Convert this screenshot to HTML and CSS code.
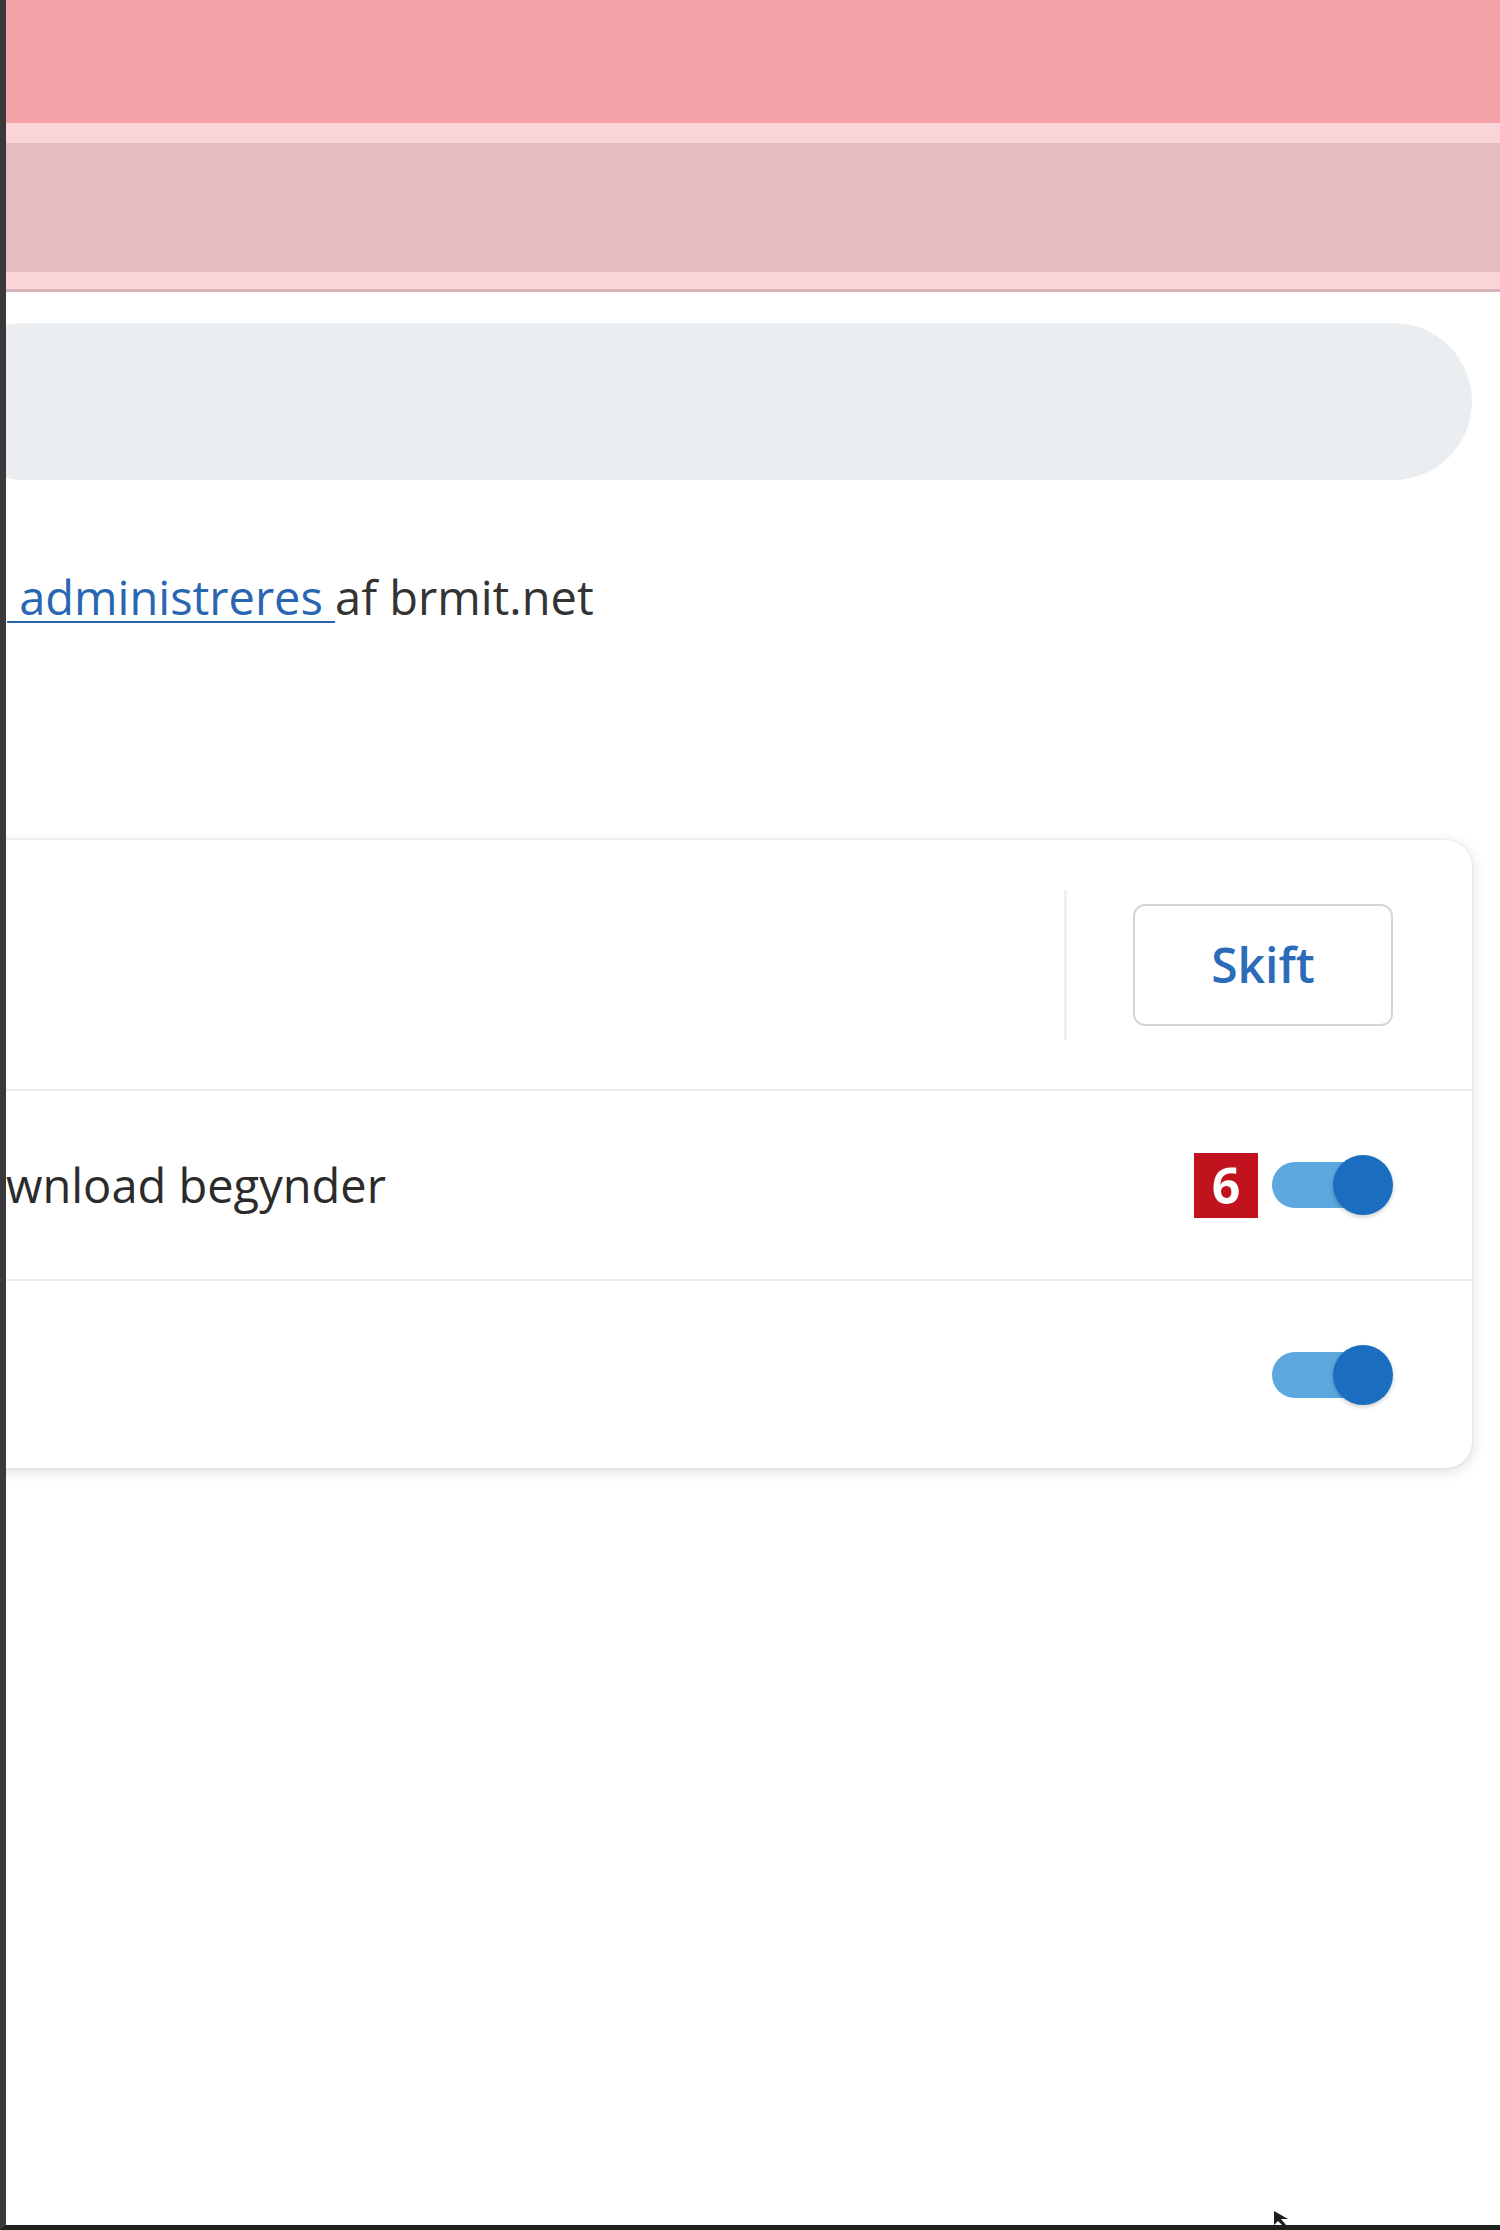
FILE: index.html
```html
<!DOCTYPE html>
<html lang="da">
<head>
    <meta charset="UTF-8">
    <meta name="viewport" content="width=device-width, initial-scale=1.0">
    <title>Indstillinger - Downloads</title>
    <link rel="stylesheet" href="styles.css">
</head>
<body>
    <div class="frame">
        <!-- Titellinje og faner (rød/lyserød) -->
        <div class="titlebar"></div>
        <div class="tabstrip"></div>
        <div class="tabline"></div>

        <div class="page">
            <!-- Søgefelt -->
            <div class="search"></div>

            <p class="managed"><a href="#" class="managed-link">&nbsp;administreres </a>af brmit.net</p>

            <!-- Downloads-kort -->
            <div class="card">
                <div class="row row-location">
                    <div class="row-label"></div>
                    <span class="divider"></span>
                    <button type="button" class="btn-change">Skift</button>
                </div>
                <div class="row">
                    <div class="row-label">wnload begynder</div>
                    <span class="badge">6</span>
                    <span class="toggle"><span class="track"></span><span class="knob"></span></span>
                </div>
                <div class="row">
                    <div class="row-label"></div>
                    <span class="toggle"><span class="track"></span><span class="knob"></span></span>
                </div>
            </div>
        </div>

        <svg class="cursor" width="18" height="14" viewBox="0 0 18 14">
            <path d="M2 0 L2 14 L6 10 L10 14 L14 14 L9 8 L16 8 Z" fill="#1e1e1e"/>
        </svg>
    </div>
</body>
</html>
```

FILE: styles.css
```css
html, body {
    margin: 0;
    padding: 0;
    background: #ffffff;
}
body {
    font-family: "Open Sans", "Noto Sans", Arial, sans-serif;
    color: #2b2b2b;
    overflow: hidden;
}
.frame {
    position: relative;
    height: 2230px;
    box-sizing: border-box;
    border-left: 6px solid #3a3838;
    border-bottom: 5px solid #1f1f1f;
    overflow: hidden;
}
.titlebar {
    height: 123px;
    background: #f4a2aa;
}
.tabstrip {
    height: 129px;
    background: #e4bcc1;
    border-top: 20px solid #f9d4d9;
    border-bottom: 17px solid #f9d4d9;
}
.tabline {
    height: 3px;
    background: #d7b2b8;
}
.page {
    padding: 31px 28px 0 0;
}
.search {
    height: 157px;
    margin-left: -60px;
    background: #eaeef0;
    border-radius: 79px;
}
.managed {
    margin: 85px 0 0 1px;
    font-size: 47px;
    line-height: 64px;
    color: #333333;
    white-space: nowrap;
}
.managed-link {
    color: #2866b2;
    text-decoration: underline;
    text-decoration-thickness: 2px;
    text-underline-offset: 6px;
}
.card {
    margin: 211px 0 0 -60px;
    background: #ffffff;
    border-radius: 26px;
    box-shadow: 0 3px 14px rgba(0, 0, 0, 0.14), 0 0 2px rgba(0, 0, 0, 0.12);
}
.row {
    display: flex;
    align-items: center;
    height: 188px;
    padding: 0 79px 0 60px;
    border-top: 2px solid #ebeced;
}
.row:last-child {
    height: 187px;
}
.row-location {
    height: 249px;
    border-top: none;
}
.row-label {
    flex: 1;
    font-size: 47px;
    line-height: 64px;
    color: #2b2b2b;
    white-space: nowrap;
}
.divider {
    width: 3px;
    height: 150px;
    background: #f0f1f2;
    margin-right: 66px;
}
.btn-change {
    width: 260px;
    height: 122px;
    background: #ffffff;
    border: 2px solid #d3d6d8;
    border-radius: 12px;
    font-family: "Open Sans", Arial, sans-serif;
    font-size: 48px;
    font-weight: 600;
    color: #2a6cb8;
    cursor: pointer;
}
.badge {
    width: 64px;
    height: 65px;
    margin-right: 14px;
    background: #c0131d;
    color: #ffffff;
    font-size: 50px;
    font-weight: 700;
    line-height: 65px;
    text-align: center;
}
.toggle {
    display: flex;
    align-items: center;
}
.track {
    width: 108px;
    height: 46px;
    border-radius: 23px;
    background: #5ba7de;
}
.knob {
    width: 60px;
    height: 60px;
    margin-left: -47px;
    border-radius: 50%;
    background: #1a6dbf;
    box-shadow: 0 2px 4px rgba(0, 0, 0, 0.2);
}
.cursor {
    position: absolute;
    left: 1266px;
    bottom: 0;
}
```
